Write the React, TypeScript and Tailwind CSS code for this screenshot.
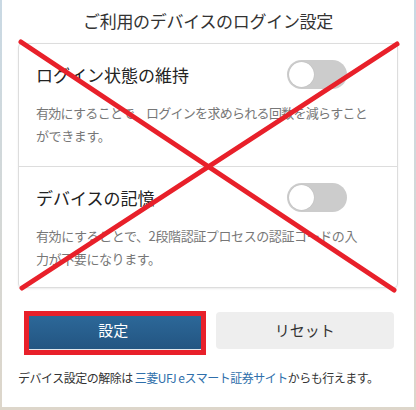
import React from 'react'

const jp = { fontFamily: '"Noto Sans CJK JP", "Liberation Sans", sans-serif' }

function Toggle() {
  return (
    <div className="relative h-[29px] w-[60px] shrink-0 rounded-full bg-[#cccccc]">
      <div className="absolute left-[2px] top-[2px] h-[25px] w-[25px] rounded-full bg-white shadow-[0_0_1px_rgba(0,0,0,0.2)]" />
    </div>
  )
}

function SettingRow({ title, desc, last }: { title: string; desc: React.ReactNode; last?: boolean }) {
  return (
    <div className={last ? 'px-[17px] pt-4 pb-[17px]' : 'border-b border-[#dddddd] px-[17px] pt-4 pb-[19px]'}>
      <div className="flex h-[29px] items-center">
        <div className="w-[251px] text-[17px] leading-[29px] text-[#222222]">{title}</div>
        <Toggle />
      </div>
      <p className="mt-3 whitespace-nowrap text-[13px] leading-[23px] tracking-[-0.4px] text-[#777777]">{desc}</p>
    </div>
  )
}

export default function App() {
  return (
    <div className="h-[410px] w-[416px] bg-gradient-to-b from-[#c9d9e4] to-[#ddd6ca]" style={jp}>
      <div className="relative mx-[2px] h-[407px] bg-white">
        <h1 className="pt-[7px] text-center text-[17px] leading-[28px] tracking-[-0.3px] text-[#333333]">
          ご利用のデバイスのログイン設定
        </h1>

        {/* 設定カード */}
        <div className="mx-4 mt-[8px] rounded-[4px] border border-[#dddddd] shadow-[0_1px_2px_rgba(0,0,0,0.08)]">
          <SettingRow
            title="ログイン状態の維持"
            desc={
              <>
                <span className="tracking-[-0.7px]">有効にすることで、ログインを求められる回数を減らすこと</span>
                <br />
                ができます。
              </>
            }
          />
          <SettingRow
            title="デバイスの記憶"
            last
            desc={
              <>
                有効にすることで、2段階認証プロセスの認証コードの入
                <br />
                力が不要になります。
              </>
            }
          />
        </div>

        {/* ボタン */}
        <div className="mt-[24px] flex gap-[13px] pl-[22px] pr-[20px]">
          <button className="h-[37px] flex-1 rounded-[3px] bg-gradient-to-b from-[#2d6a9b] to-[#235582] text-[15px] text-white shadow-[0_1px_0_#dfe6ec]">
            設定
          </button>
          <button className="h-[37px] flex-1 rounded-[4px] bg-[#eeeeee] text-[15px] text-[#333333]">
            リセット
          </button>
        </div>

        <p className="mt-[20px] pl-4 text-[12px] leading-[18px] tracking-[-0.5px] text-[#333333]">
          デバイス設定の解除は <span className="text-[#2f6fab]">三菱UFJ eスマート証券サイト</span>からも行えます。
        </p>

        {/* 赤枠 */}
        <div className="absolute left-[22px] top-[311px] h-[44px] w-[182px] border-[5px] border-[#e8202a]" />

        {/* 赤い× */}
        <svg className="pointer-events-none absolute left-[-2px] top-0" width="416" height="410" viewBox="0 0 416 410">
          <line x1="21" y1="42" x2="394" y2="290" stroke="#e8202a" strokeWidth="5" strokeLinecap="round" />
          <line x1="397" y1="44" x2="22" y2="288" stroke="#e8202a" strokeWidth="5" strokeLinecap="round" />
        </svg>
      </div>
    </div>
  )
}
